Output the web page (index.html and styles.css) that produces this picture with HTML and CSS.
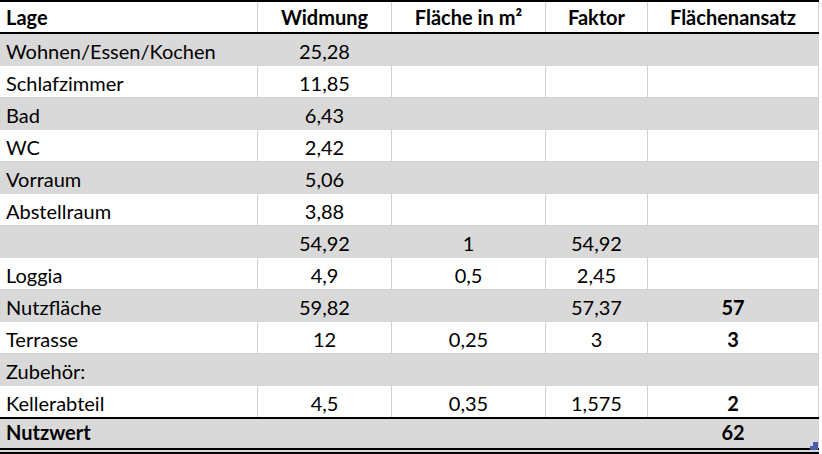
FILE: index.html
```html
<!DOCTYPE html>
<html lang="de">
<head>
<meta charset="utf-8">
<title>Nutzwert</title>
<link rel="stylesheet" href="styles.css">
</head>
<body>
<div class="sheet">
  <div class="row head">
    <div class="cell left">Lage</div>
    <div class="cell">Widmung</div>
    <div class="cell">Fläche in m²</div>
    <div class="cell">Faktor</div>
    <div class="cell">Flächenansatz</div>
  </div>
  <div class="row gray">
    <div class="cell left">Wohnen/Essen/Kochen</div>
    <div class="cell">25,28</div>
    <div class="cell"></div>
    <div class="cell"></div>
    <div class="cell"></div>
  </div>
  <div class="row">
    <div class="cell left">Schlafzimmer</div>
    <div class="cell">11,85</div>
    <div class="cell"></div>
    <div class="cell"></div>
    <div class="cell"></div>
  </div>
  <div class="row gray">
    <div class="cell left">Bad</div>
    <div class="cell">6,43</div>
    <div class="cell"></div>
    <div class="cell"></div>
    <div class="cell"></div>
  </div>
  <div class="row">
    <div class="cell left">WC</div>
    <div class="cell">2,42</div>
    <div class="cell"></div>
    <div class="cell"></div>
    <div class="cell"></div>
  </div>
  <div class="row gray">
    <div class="cell left">Vorraum</div>
    <div class="cell">5,06</div>
    <div class="cell"></div>
    <div class="cell"></div>
    <div class="cell"></div>
  </div>
  <div class="row">
    <div class="cell left">Abstellraum</div>
    <div class="cell">3,88</div>
    <div class="cell"></div>
    <div class="cell"></div>
    <div class="cell"></div>
  </div>
  <div class="row gray">
    <div class="cell left"></div>
    <div class="cell">54,92</div>
    <div class="cell">1</div>
    <div class="cell">54,92</div>
    <div class="cell"></div>
  </div>
  <div class="row">
    <div class="cell left">Loggia</div>
    <div class="cell">4,9</div>
    <div class="cell">0,5</div>
    <div class="cell">2,45</div>
    <div class="cell"></div>
  </div>
  <div class="row gray">
    <div class="cell left">Nutzfläche</div>
    <div class="cell">59,82</div>
    <div class="cell"></div>
    <div class="cell">57,37</div>
    <div class="cell strong">57</div>
  </div>
  <div class="row">
    <div class="cell left">Terrasse</div>
    <div class="cell">12</div>
    <div class="cell">0,25</div>
    <div class="cell">3</div>
    <div class="cell strong">3</div>
  </div>
  <div class="row gray">
    <div class="cell left">Zubehör:</div>
    <div class="cell"></div>
    <div class="cell"></div>
    <div class="cell"></div>
    <div class="cell"></div>
  </div>
  <div class="row last">
    <div class="cell left">Kellerabteil</div>
    <div class="cell">4,5</div>
    <div class="cell">0,35</div>
    <div class="cell">1,575</div>
    <div class="cell strong">2</div>
  </div>
  <div class="row gray total">
    <div class="cell left">Nutzwert</div>
    <div class="cell"></div>
    <div class="cell"></div>
    <div class="cell"></div>
    <div class="cell">62</div>
  </div>
  <svg class="handle" width="8" height="8" viewBox="0 0 8 8"><path d="M3 0H8V8H0V4H3Z" fill="#4a5ab2"/></svg>
</div>
</body>
</html>
```
FILE: styles.css
```css
html, body {
  margin: 0;
  padding: 0;
  background: #ffffff;
}

body {
  font-family: "Lato", "Liberation Sans", sans-serif;
  font-size: 20px;
  color: #000000;
}

.sheet {
  position: relative;
  width: 819px;
  border-top: 2px solid #000000;
}

.row {
  display: grid;
  grid-template-columns: 258px 134px 154px 102px 171px;
  border-bottom: 1px solid #d2d2d2;
}

.cell {
  box-sizing: border-box;
  height: 31px;
  padding: 5px 4px 0 4px;
  line-height: 24px;
  text-align: center;
  white-space: nowrap;
  overflow: hidden;
  border-right: 1px solid #d2d2d2;
}

.cell.left {
  text-align: left;
  padding-left: 6px;
}

.row.gray {
  background: #d9d9d9;
  border-bottom-color: transparent;
}

.row.gray .cell {
  border-right-color: transparent;
}

.row.gray .cell:last-child {
  border-right-color: #d2d2d2;
}

.row.head {
  border-bottom: 2px solid #000000;
  font-weight: 700;
}

.row.head .cell {
  height: 30px;
  padding-top: 3px;
}

.row.last {
  border-bottom: 2px solid #000000;
}

.row.total {
  border-bottom: 6px double #000000;
  font-weight: 700;
}

.row.total .cell {
  height: 29px;
  padding-top: 1px;
}

.strong {
  font-weight: 700;
}

.handle {
  position: absolute;
  left: 810px;
  top: 440px;
  display: block;
}
```
